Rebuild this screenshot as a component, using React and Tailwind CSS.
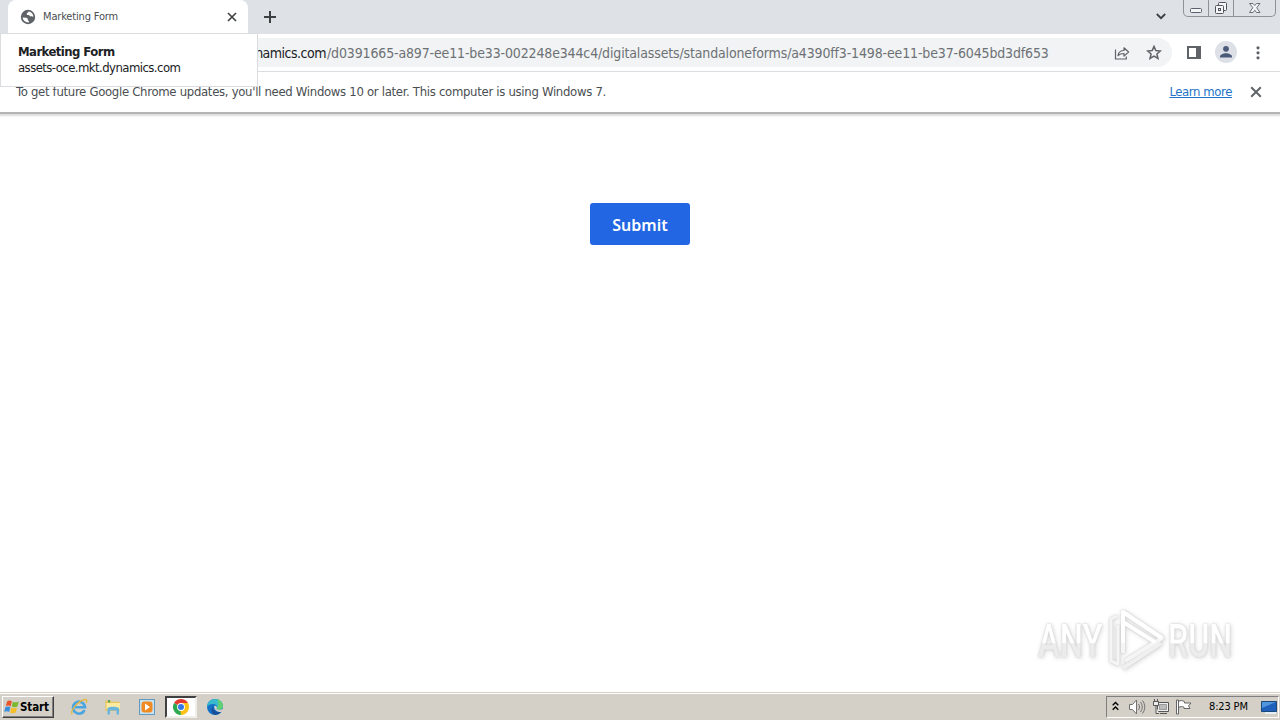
function Globe() {
  return (
    <svg className="w-4 h-4 shrink-0" viewBox="0 0 16 16">
      <circle cx="8" cy="8" r="7.2" fill="#5f6368" />
      <path d="M2.6 8.6 6.2 8.8c1 .1 1.6.7 1.6 1.6v.8c.8.1 1.2.5 1.1 1.3l-.2.9C5.600 13.600 3 11.500 2.600 8.600z" fill="#fff" />
      <path d="M8.600 2.500c-.3 1.400-1.800 1-1.900 2.400-.1 1 .8 1.200 1.800 1.200.9.100 1.100.9 1.900 1.200.9.400 1.800.1 2.900.6.2-2.500-1.700-4.900-4.700-5.400z" fill="#fff" />
    </svg>
  );
}

function Cross({ className, color = '#3c4043' }) {
  return (
    <svg className={className} viewBox="0 0 10 10">
      <path d="M1 1 9 9M9 1 1 9" stroke={color} strokeWidth="1.6" />
    </svg>
  );
}

function WindowControls() {
  return (
    <div className="flex w-[93px] h-[17px] border border-t-0 border-[#8e9299] rounded-b-[5px]">
      <div className="w-[25px] border-r border-[#8e9299]">
        <svg className="w-6 h-4" viewBox="0 0 24 16">
          <rect x="6.500" y="8.500" width="11" height="4" rx="1" fill="#f4f5f7" stroke="#5c6068" />
        </svg>
      </div>
      <div className="w-[25px] border-r border-[#8e9299]">
        <svg className="w-6 h-4" viewBox="0 0 24 16" fill="#f4f5f7" stroke="#50545c">
          <rect x="9.500" y="2.500" width="8" height="8" rx="1" />
          <rect x="6.500" y="5.500" width="8" height="8" rx="1" />
          <rect x="9.500" y="8.500" width="2" height="2" />
        </svg>
      </div>
      <svg className="w-[41px] h-4" viewBox="0 0 41 16">
        <path d="M15.500 3.500h3.500l1.800 2 1.800-2H26l-3.300 4.200 3.300 4.800h-3.500l-1.700-2.300-1.800 2.300h-3.500l3.300-4.800z" fill="#f4f5f7" stroke="#6a6e76" />
      </svg>
    </div>
  );
}

function TabStrip() {
  return (
    <div className="flex h-[34px] bg-[#dee1e6] pl-2">
      <div className="flex items-center w-[240px] h-[34px] pl-3 pr-[11px] bg-white rounded-t-lg">
        <Globe />
        <span className="ml-[7px] pt-px text-[11px] tracking-[-0.16px] text-[#4a4e52]">Marketing Form</span>
        <Cross className="w-[10px] h-[10px] ml-auto" />
      </div>
      <svg className="w-3 h-3 ml-4 mt-[11px]" viewBox="0 0 12 12">
        <path d="M6 0v12M0 6h12" stroke="#3c4043" strokeWidth="2" />
      </svg>
      <svg className="w-[10px] h-[7px] ml-auto mt-[13px]" viewBox="0 0 10 7">
        <path d="m.8 1 4.200 4.200L9.200 1" fill="none" stroke="#3c4043" strokeWidth="1.800" />
      </svg>
      <div className="ml-[17px] mr-1">
        <WindowControls />
      </div>
    </div>
  );
}

function Toolbar() {
  return (
    <div className="flex items-center h-[38px] bg-white border-b border-[#dadce0]">
      <div className="flex items-center w-[1172px] h-[29px] bg-[#f1f3f4] rounded-r-full text-[14px] whitespace-nowrap">
        <span className="flex justify-end w-[326px] pt-px tracking-[-0.5px] text-[#202124]">dynamics.com</span>
        <span className="pt-px pl-px tracking-[-0.145px] text-[#6d7175]">
          /d0391665-a897-ee11-be33-002248e344c4/digitalassets/standaloneforms/a4390ff3-1498-ee11-be37-6045bd3df653
        </span>
        <svg className="w-4 h-4 ml-auto mr-4 shrink-0" viewBox="0 0 16 16" fill="none" stroke="#5f6368" strokeWidth="1.200">
          <path d="M1.500 4.500v9.500h10.800v-2.600" />
          <path d="M4 10.500c.5-3.400 2.600-5 6-5V2.800l4.600 4.200-4.600 4.100V8.500c-2.700 0-4.500.5-6 2z" strokeLinejoin="round" />
        </svg>
        <svg className="w-4 h-4 mr-[10px] shrink-0" viewBox="0 0 16 16" fill="none" stroke="#5f6368" strokeWidth="1.500">
          <path d="m8 1.400 1.800 4.200 4.600.4-3.500 3 1.100 4.500L8 11.100l-4 2.400L5.100 9 1.600 6l4.600-.4z" />
        </svg>
      </div>
      <svg className="w-[14px] h-[14px] ml-[15px]" viewBox="0 0 14 14">
        <path d="M1 1h12v11H1z" fill="none" stroke="#5f6368" strokeWidth="2" />
        <path d="M9 1h5v12H9z" fill="#5f6368" />
      </svg>
      <svg className="w-[22px] h-[22px] ml-[14px] mb-px" viewBox="0 0 22 22">
        <circle cx="11" cy="11" r="11" fill="#dde1e7" />
        <circle cx="11" cy="7.800" r="2.900" fill="#4c5a7a" />
        <path d="M5 16.500v-1c0-2 3.400-3.300 6-3.300s6 1.300 6 3.300v1z" fill="#4c5a7a" />
      </svg>
      <svg className="w-1 h-[14px] ml-[19px]" viewBox="0 0 4 14" fill="#5f6368">
        <circle cx="2" cy="1.800" r="1.600" />
        <circle cx="2" cy="6.800" r="1.600" />
        <circle cx="2" cy="11.800" r="1.600" />
      </svg>
    </div>
  );
}

function InfoBar() {
  return (
    <div className="flex items-center h-[42px] pl-4 pr-[19px] pb-px bg-white border-b-2 border-[#b4b4b4] text-[13px] whitespace-nowrap">
      <span className="tracking-[-0.305px] text-[#4a4e52]">
        To get future Google Chrome updates, you'll need Windows 10 or later. This computer is using Windows 7.
      </span>
      <a href="#" className="ml-auto tracking-[-0.4px] text-[#2474c8] underline">Learn more</a>
      <Cross className="w-3 h-3 ml-[18px] mr-[-1px] mt-px" color="#5f6368" />
    </div>
  );
}

function TabTooltip() {
  return (
    <div className="absolute left-0 top-[33px] w-[258px] h-[54px] pl-[17px] pt-[10px] bg-white border border-[#dadce0] text-[13px] leading-4 text-[#202124] whitespace-nowrap">
      <div className="font-bold tracking-[-0.57px]">Marketing Form</div>
      <div className="tracking-[-0.56px]">assets-oce.mkt.dynamics.com</div>
    </div>
  );
}

function Watermark() {
  return (
    <div className="absolute left-[1038px] top-[608px] flex items-center h-16 font-['Roboto',sans-serif] text-[46px] font-medium text-transparent [filter:drop-shadow(0_0_1px_#ccc)_drop-shadow(1px_1px_2px_#ddd)]">
      <div className="w-[68px] pt-[3px]">
        <span className="inline-block origin-left scale-x-[0.71] bg-linear-to-b from-white from-52% to-[#ececec] to-53% bg-clip-text">ANY</span>
      </div>
      <svg className="w-[62px] h-16 shrink-0" viewBox="0 0 62 64" fill="none" stroke="#fff" strokeWidth="4" strokeLinejoin="round">
        <path d="M17 45V4l39 26-37 23" stroke="#f5f5f5" />
        <path d="M17 35V4l39 26" />
        <path d="m17 14 32 20" />
        <path d="M11 8 5 11v42l7 3V17" stroke="#f5f5f5" strokeWidth="3" />
        <path d="m17 60 38-25" stroke="#f0f0f0" />
      </svg>
      <div className="w-[66px] pt-[3px]">
        <span className="inline-block origin-left scale-x-[0.7] bg-linear-to-b from-white from-52% to-[#ececec] to-53% bg-clip-text">RUN</span>
      </div>
    </div>
  );
}

function WindowsFlag() {
  return (
    <svg className="w-4 h-4" viewBox="0 0 16 16">
      <path d="M3.200 2.200c1.700-1 3.300-.8 4.800.1L6.700 7.200c-1.600-.9-3.200-1-4.900-.2z" fill="#e8562a" />
      <path d="M8.900 2.700c1.700.9 3.400.9 5.900-.2l-1.400 5c-2 1-3.900 1-5.700.1z" fill="#7ab82f" />
      <path d="M1.500 8c1.700-.9 3.300-.7 4.900.1l-1.300 4.800c-1.600-.9-3.200-1-4.900-.1z" fill="#3a8edb" />
      <path d="M7.400 8.600c1.700.9 3.500.9 5.700-.1l-1.400 4.900c-1.900 1-3.800 1-5.600 0z" fill="#f5bd26" />
    </svg>
  );
}

function InternetExplorer() {
  return (
    <svg className="w-[18px] h-[18px]" viewBox="0 0 18 18" fill="none">
      <path d="M14.500 12.100A6 6 0 1 1 15 9.300H5" stroke="#4aa6e0" strokeWidth="2.600" />
      <path d="M2.300 16.200C-.6 13.300 8 3 14.800 1.500c2.500-.4 2.300 1.800 1.300 3.500" stroke="#e7b63d" strokeWidth="1.300" />
    </svg>
  );
}

function Explorer() {
  return (
    <svg className="w-[18px] h-[18px]" viewBox="0 0 18 18">
      <path d="M1.500 2.500h5l1 1.200h8V13h-14z" fill="#e9c557" />
      <path d="M2.500 5h13.500v6H2.500z" fill="#fbeaa0" />
      <path d="M4 2h2v2.500H4z" fill="#58a65c" />
      <path d="M3.500 10c3-1.800 8-1.800 11.500 0v6.500h-2.500v-4H6v4H3.500z" fill="#68b6df" />
    </svg>
  );
}

function MediaPlayer() {
  return (
    <svg className="w-[18px] h-[18px]" viewBox="0 0 18 18">
      <rect x="1.500" y="1.500" width="15" height="15" fill="#c8e1ef" stroke="#619bc2" />
      <rect x="3.500" y="3.500" width="11" height="11" rx="3" fill="#f28a22" />
      <path d="m7 5.500 5 3.500-5 3.500z" fill="#fff" />
    </svg>
  );
}

function Chrome() {
  return (
    <svg className="w-[18px] h-[18px]" viewBox="0 0 18 18">
      <path d="M9 9 2.070 5A8 8 0 0 1 15.930 5z" fill="#e33b2e" />
      <path d="M9 9 15.930 5A8 8 0 0 1 9 17z" fill="#fbc116" />
      <path d="M9 9v8A8 8 0 0 1 2.070 5z" fill="#2da94f" />
      <path d="M9 5h6.930a8 8 0 0 1 .6 1.500L12.500 11 9 17l-1-6z" fill="#fbc116" />
      <circle cx="9" cy="9" r="3.900" fill="#fff" />
      <circle cx="9" cy="9" r="3" fill="#3478e8" />
    </svg>
  );
}

function Edge() {
  return (
    <svg className="w-[18px] h-[18px]" viewBox="0 0 18 18">
      <circle cx="9" cy="9" r="8" fill="#1473c8" />
      <path d="M1 9C1 4.500 4.600 1 9 1s8 3.200 8 7c0 2.400-1.600 3.800-3.900 3.800-1.500 0-2.600-.6-2.400-1.400.6-1 .5-4-3-4.300C4.500 5.900 2 7.300 1 9z" fill="#38b9cc" />
      <path d="M11 1.300c3.500.7 6 3.500 6 6.700 0 2.400-1.600 3.800-3.900 3.800-1.500 0-2.600-.6-2.400-1.400 2.300-2.500 2.300-6 .3-9.100z" fill="#62cf70" />
      <path d="M7.500 8c-1.600 3.400 1.400 6.500 7.500 6.200A8 8 0 0 1 9 17c-3.900-1.500-5-6-1.500-9z" fill="#174f9b" />
      <path d="M8.500 7.800c1.500-.5 2.800.8 2.200 2.600-.2.800.9 1.400 2.400 1.400 1.300 0 2.300-.4 3-.9l1.600 1-2.500 2.200c-4.500.3-7.900-3-6.700-6.300z" fill="#d4d0c8" />
    </svg>
  );
}

function Tray() {
  return (
    <div className="flex items-center w-[173px] h-[22px] pl-[5px] border border-[#808080] border-b-white border-r-white">
      <svg className="w-[7px] h-[10px] mb-[2px]" viewBox="0 0 7 10" fill="none" stroke="#000" strokeWidth="1.400">
        <path d="M.7 4.200 3.500 1.500l2.800 2.700M.7 8.700 3.500 6l2.800 2.700" />
      </svg>
      <svg className="w-[18px] h-[18px] ml-[9px]" viewBox="0 0 18 18" fill="#fff" stroke="#717171">
        <path d="M1.500 6.500h3l4-4.500v14l-4-4.500h-3z" />
        <path d="M10.500 6c1.300 2 1.300 4 0 6M12.500 4c2.300 3 2.300 7 0 10M14.500 2.500c3 4 3 9 0 13" fill="none" />
      </svg>
      <svg className="w-[18px] h-[18px] ml-[6px]" viewBox="0 0 18 18" fill="#eee" stroke="#555">
        <path d="M5.500 4.500h11v9h-11z" />
        <path d="M7.500 6.500h7v5h-7z" fill="#bbb" stroke="#999" />
        <path d="M8 15.500h7" />
        <path d="M1.500 3.500h5v4h-5zM2.500 1v2M5.500 1v2M4 8v7.500h3" />
      </svg>
      <svg className="w-[18px] h-[18px] ml-[5px]" viewBox="0 0 18 18" fill="#fff" stroke="#666">
        <path d="M3.500 3.500c2-1.500 4-1 6 .2v1.300h6.500l-2.500 3 1.500 2.500H9v-1.300c-2-1-3.500-.7-5.500.3z" />
        <path d="M1.500 2h2v14h-2z" />
      </svg>
      <span className="ml-4 pt-px text-[11px] tracking-[-0.15px] text-black whitespace-nowrap">8:23 PM</span>
      <svg className="w-4 h-4 ml-auto mr-px" viewBox="0 0 16 16">
        <path d="M.5 2.500h15v10H.5z" fill="#1f60ba" stroke="#194879" />
        <path d="M1 3h14L1 9z" fill="#5295df" />
        <path d="M4 14h11" stroke="#e5edf5" strokeWidth="2" />
      </svg>
    </div>
  );
}

function Taskbar() {
  return (
    <div className="flex items-center h-[28px] bg-[#d4d0c8] border-t border-[#d4d0c8] shadow-[inset_0_1px_0_#fff]">
      <div className="flex items-center w-[52px] h-[22px] ml-[2px] mt-px pl-px border border-white border-r-[#404040] border-b-[#404040] shadow-[inset_-1px_-1px_0_#808080] text-[11.500px] font-bold tracking-[-0.1px] text-black">
        <WindowsFlag />
        <span className="pt-px">Start</span>
      </div>
      <div className="flex items-center ml-4 mt-px">
        <InternetExplorer />
        <div className="ml-4"><Explorer /></div>
        <div className="ml-4"><MediaPlayer /></div>
        <div className="flex items-center justify-center w-[32px] h-[22px] ml-[9px] bg-white border-2 border-[#404040] border-r-[#f0eee9] border-b-[#f0eee9]">
          <Chrome />
        </div>
        <div className="ml-[9px]"><Edge /></div>
      </div>
      <div className="ml-auto mr-px mt-px">
        <Tray />
      </div>
    </div>
  );
}

export default function App() {
  return (
    <div className="relative flex flex-col w-[1280px] h-[720px] overflow-hidden bg-white font-['DejaVu_Sans_Condensed','DejaVu_Sans',sans-serif]">
      <TabStrip />
      <Toolbar />
      <InfoBar />
      <main className="flex flex-1 justify-center items-start pt-[89px] shadow-[inset_0_3px_2px_-1px_#ddd]">
        <button className="w-[100px] h-[42px] pt-px bg-[#2266e3] rounded-[3px] font-['Noto_Sans','Open_Sans',sans-serif] text-[16px] font-semibold text-white">
          Submit
        </button>
      </main>
      <Taskbar />
      <TabTooltip />
      <Watermark />
    </div>
  );
}
